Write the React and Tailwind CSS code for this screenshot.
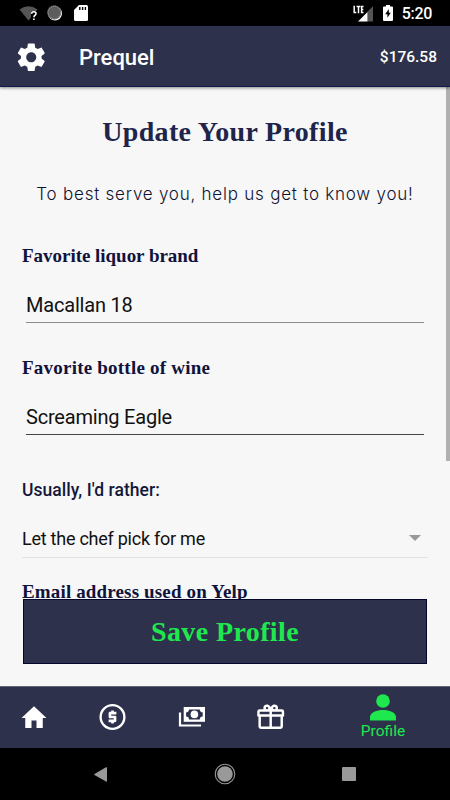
import React from 'react'

const serif = 'font-["Liberation_Serif",serif] font-bold'

const tabs = [
  { id: 'home', Icon: HomeIcon },
  { id: 'money', Icon: DollarIcon },
  { id: 'cash', Icon: CashIcon },
  { id: 'gift', Icon: GiftIcon },
]

function SettingsIcon() {
  return (
    <svg viewBox="0 0 24 24" className="mt-0.5 size-[34.500px] fill-white">
      <path d="M19.14 12.94c.04-.3.06-.61.06-.94 0-.32-.02-.64-.07-.94l2.03-1.58c.18-.14.23-.41.12-.61l-1.92-3.32c-.12-.22-.37-.29-.59-.22l-2.39.96c-.5-.38-1.03-.7-1.62-.94l-.36-2.54c-.04-.24-.24-.41-.48-.41h-3.84c-.24 0-.43.17-.47.41l-.36 2.54c-.59.24-1.13.57-1.62.94l-2.39-.96c-.22-.08-.47 0-.59.22L2.74 8.87c-.12.21-.08.47.12.61l2.03 1.58c-.05.3-.09.63-.09.94s.02.64.07.94l-2.03 1.58c-.18.14-.23.41-.12.61l1.92 3.32c.12.22.37.29.59.22l2.39-.96c.5.38 1.03.7 1.62.94l.36 2.54c.05.24.24.41.48.41h3.84c.24 0 .44-.17.47-.41l.36-2.54c.59-.24 1.13-.56 1.62-.94l2.39.96c.22.08.47 0 .59-.22l1.92-3.32c.12-.22.07-.47-.12-.61l-2.01-1.58zM12 15.5c-1.93 0-3.5-1.57-3.5-3.5s1.57-3.5 3.5-3.5 3.5 1.57 3.5 3.5-1.57 3.5-3.5 3.5z" />
    </svg>
  )
}

function HomeIcon() {
  return (
    <svg viewBox="0 0 24 24" className="size-[30px] fill-white">
      <path d="M10 20v-6h4v6h5v-8h3L12 2.6 2 12h3v8z" />
    </svg>
  )
}

function DollarIcon() {
  return (
    <svg viewBox="0 0 24 24" className="size-[31px]">
      <circle cx="12" cy="11.6" r="9.2" fill="none" stroke="#fff" strokeWidth="1.8" />
      <path fill="#fff" d="M11 16.600h2v-1h1c.55 0 1-.45 1-1v-3c0-.55-.45-1-1-1h-3v-1h4V7.600h-2V6.600h-2v1h-1c-.55 0-1 .45-1 1v3c0 .55.45 1 1 1h3v1H9v2h2v1z" />
    </svg>
  )
}

function CashIcon() {
  return (
    <svg viewBox="0 0 28 22" className="mb-px h-[22px] w-7">
      <path d="M2 6.5V19.5H23" fill="none" stroke="#fff" strokeWidth="2.2" />
      <rect x="5.7" y="1" width="21.3" height="14.8" fill="#fff" />
      <path d="M11 3.4H21.8A2.9 2.9 0 0 0 24.7 6.2V10.6A2.9 2.9 0 0 0 21.8 13.4H11A2.9 2.9 0 0 0 8.1 10.6V6.2A2.9 2.9 0 0 0 11 3.4Z" fill="#2d314b" />
      <circle cx="16.4" cy="8.4" r="3.8" fill="#fff" />
    </svg>
  )
}

function GiftIcon() {
  return (
    <svg viewBox="0 0 24 24" className="mb-px size-[29.4px] fill-white">
      <path d="M22 12V20A2 2 0 0 1 20 22H4A2 2 0 0 1 2 20V12A1 1 0 0 1 1 11V8A2 2 0 0 1 3 6H6.17C6.06 5.69 6 5.35 6 5A3 3 0 0 1 9 2C10 2 10.88 2.5 11.43 3.24L12 4L12.57 3.24C13.12 2.5 14 2 15 2A3 3 0 0 1 18 5C18 5.35 17.94 5.69 17.83 6H21A2 2 0 0 1 23 8V11A1 1 0 0 1 22 12M4 20H11V12H4V20M20 20V12H13V20H20M9 4A1 1 0 0 0 8 5A1 1 0 0 0 9 6A1 1 0 0 0 10 5A1 1 0 0 0 9 4M15 4A1 1 0 0 0 14 5A1 1 0 0 0 15 6A1 1 0 0 0 16 5A1 1 0 0 0 15 4M3 8V10H11V8H3M13 8V10H21V8H13Z" />
    </svg>
  )
}

function StatusBar() {
  return (
    <div className="flex h-[26px] items-center bg-black pl-[19px] pr-[18px] text-white">
      {/* wifi, no internet */}
      <svg viewBox="0 0 19 16" className="h-4 w-[19px]">
        <path d="M.5 4.500Q9.500-1.800 18.500 4.500L9.500 15.500Z" fill="#555" />
        <path d="M12 6.500H19V16H12Z" fill="#000" />
        <path d="M12.600 8.800Q12.700 6.700 14.800 6.700Q17 6.700 17 8.500Q17 9.600 15.900 10.400Q14.900 11.100 14.900 12.300M14.900 13.400v1.700" fill="none" stroke="#fff" strokeWidth="1.600" />
      </svg>
      {/* sync spinner */}
      <svg viewBox="0 0 16 16" className="ml-[9px] size-4">
        <circle cx="8" cy="8.500" r="7" fill="#fff" />
        <circle cx="7.300" cy="7.500" r="6.900" fill="#5c5c5c" />
        <circle cx="7.300" cy="7.500" r="6.300" fill="none" stroke="#8d8d8d" strokeWidth="1.200" strokeDasharray="1.200 .9" />
      </svg>
      {/* sd card */}
      <svg viewBox="0 0 14 16" className="ml-[11px] h-4 w-3.5">
        <path d="M5 0H12.500Q14 0 14 1.500V14.500Q14 16 12.500 16H1.500Q0 16 0 14.500V5Z" fill="#fff" />
        <path d="M5.800 2v3M8.600 2v3M11.400 2v3" stroke="#000" strokeWidth="1.400" />
      </svg>
      <div className="ml-auto flex items-center">
        <svg viewBox="0 0 21 17" className="h-[17px] w-[21px]">
          <path d="M14.500 16.500V6.500L20 1.200V16.500Z" fill="#555" />
          <path d="M5 16.500L14.500 7V16.500Z" fill="#fff" />
          <path d="M1.200 .8V7.500H3.300M3.600 1.600H7.400M5.500 1.600V8.200M10.500 1.600H8.600V7.500H10.500M8.600 4.500H10.300" fill="none" stroke="#fff" strokeWidth="1.500" />
        </svg>
        <svg viewBox="0 0 10 16" className="ml-[9px] h-4 w-2.5">
          <path d="M3 0H7V1.500H9Q10 1.500 10 2.500V15Q10 16 9 16H1Q0 16 0 15V2.500Q0 1.500 1 1.500H3Z" fill="#fff" />
          <path d="M5.800 4L2.200 9.300H4.400V12.700L7.800 7.700H5.800Z" fill="#000" />
        </svg>
        <span className="ml-[9px] pt-px text-[16px] leading-none font-medium tracking-[-0.3px]">5:20</span>
      </div>
    </div>
  )
}

function Field({ label, value, line, labelTracking }) {
  return (
    <div className="h-28">
      <div className={`${serif} ${labelTracking} text-[19px] leading-6 text-[#10133c]`}>{label}</div>
      <div className={`mx-1 mt-[23px] h-8 border-b text-xl leading-[29px] tracking-[-0.2px] text-[#111] ${line}`}>{value}</div>
    </div>
  )
}

export default function App() {
  return (
    <div className='flex h-[800px] w-[450px] flex-col overflow-hidden bg-[#f7f7f7] font-["Roboto",sans-serif] whitespace-nowrap'>
      <StatusBar />

      <header className="relative z-10 flex h-[61px] items-center border-b border-[#15194a] bg-[#2d314b] pl-[13.500px] pr-[13px] text-white shadow-[0_1px_3px_rgba(0,0,0,0.45)]">
        <SettingsIcon />
        <h1 className="ml-[31px] pt-[3px] text-[22px] leading-none font-medium">Prequel</h1>
        <span className="ml-auto pt-[3px] text-[15.5px] leading-none font-medium">$176.58</span>
      </header>

      {/* scrollable form */}
      <main className="relative h-[512px] overflow-hidden px-[22px]">
        <h2 className={`${serif} mt-7 text-center text-[28px] leading-[34px] tracking-[0.35px] text-[#20244a]`}>Update Your Profile</h2>
        <p className='mt-[33px] text-center font-["Inter",sans-serif] text-[17px] leading-6 font-light tracking-[0.77px] text-[#10132f]'>
          To best serve you, help us get to know you!
        </p>
        <div className="mt-[38px]">
          <Field label="Favorite liquor brand" value="Macallan 18" line="border-[#8c8c8c]" labelTracking="tracking-[-0.03px]" />
          <Field label="Favorite bottle of wine" value="Screaming Eagle" line="border-[#444]" labelTracking="tracking-[0.22px]" />
        </div>
        <div className="mt-2.5 text-[17.5px] leading-6 font-medium tracking-[0.05px] text-[#14183c]">Usually, I'd rather:</div>
        <div className="mt-[18px] flex h-[38px] w-[406px] items-center justify-between border-b border-[#e2e2e2] pr-[7px] text-lg tracking-[-0.25px] text-[#111]">
          Let the chef pick for me
          <svg viewBox="0 0 12 6" className="mb-0.5 h-1.5 w-3 fill-[#999]"><path d="M0 0H12L6 6Z" /></svg>
        </div>
        <div className={`${serif} mt-[22px] text-[19px] leading-6 tracking-[0.15px] text-[#10133c]`}>Email address used on Yelp</div>
        <div className="absolute top-0 right-0 h-[374px] w-1 bg-[#b0b0b0]" />
      </main>
      <button className={`${serif} ml-[23px] h-[65px] w-[404px] shrink-0 border border-[#04062e] bg-[#2d314b] text-[28px] leading-none tracking-[0.4px] text-[#1fe84f]`}>
        Save Profile
      </button>

      <nav className="mt-auto grid h-[62px] shrink-0 grid-cols-[73px_79.5px_78.5px_80px_139px] items-center border-t border-[#62657a] bg-[#2d314b]">
        {tabs.map(({ id, Icon }) => (
          <div key={id} className="flex justify-center first:pr-[5px]"><Icon /></div>
        ))}
        <div className="flex flex-col items-center pb-px pl-[5px] text-[#1fe84f]">
          <svg viewBox="0 0 26 27" className="h-[27px] w-[26px] fill-current">
            <circle cx="13" cy="7" r="6.800" />
            <path d="M0 26.500V23C0 18.500 7 16 13 16S26 18.500 26 23V26.500Z" />
          </svg>
          <span className="text-[15.5px] leading-5">Profile</span>
        </div>
      </nav>

      {/* android buttons */}
      <div className="flex h-[52px] shrink-0 items-center justify-between bg-black pr-[94px] pl-[94px]">
        <svg viewBox="0 0 13 15" className="h-[15px] w-[13px] fill-[#999]"><path d="M12 .3Q13 0 13 1V14Q13 15 12 14.500L.5 8Q0 7.500.5 7Z" /></svg>
        <svg viewBox="0 0 22 22" className="size-[22px]">
          <circle cx="11" cy="11" r="9.800" fill="none" stroke="#999" strokeWidth="1.100" />
          <circle cx="11" cy="11" r="7.800" fill="#999" />
        </svg>
        <div className="size-3.5 rounded-[1px] bg-[#999]" />
      </div>
    </div>
  )
}
